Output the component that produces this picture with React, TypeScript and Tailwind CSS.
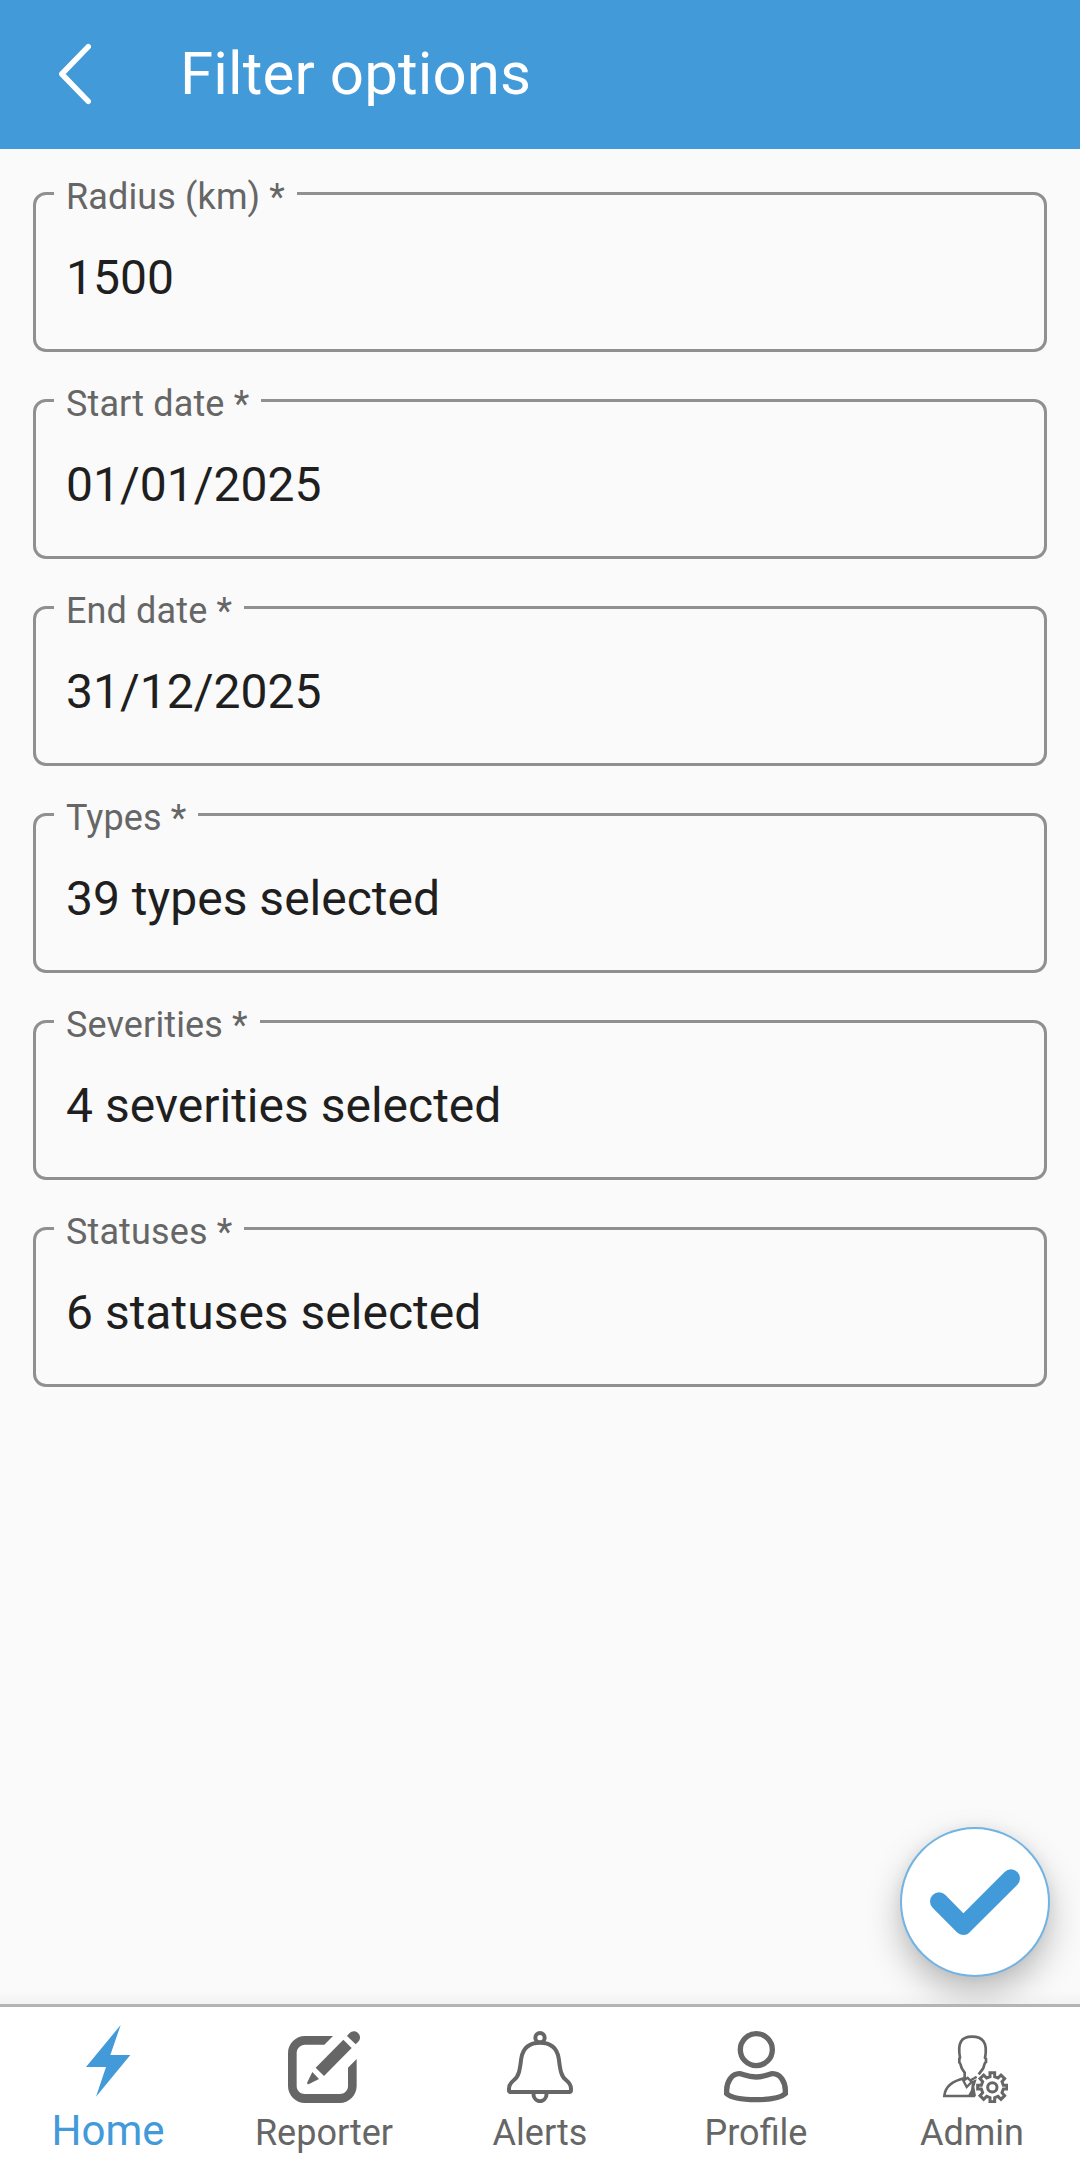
import type { ReactNode } from "react";

const fields = [
  { label: "Radius (km) *", value: "1500" },
  { label: "Start date *", value: "01/01/2025" },
  { label: "End date *", value: "31/12/2025" },
  { label: "Types *", value: "39 types selected" },
  { label: "Severities *", value: "4 severities selected" },
  { label: "Statuses *", value: "6 statuses selected" },
];

function Header() {
  return (
    <header className="flex h-[149px] shrink-0 items-center bg-[#429ad9] pb-[1px] text-white">
      <button aria-label="Back" className="ml-[57px] block">
        <svg width="34" height="62" viewBox="0 0 34 62" fill="none" stroke="currentColor" strokeWidth="5.5" strokeLinecap="round" strokeLinejoin="round" className="block">
          <path d="M31.3 3.7L4.8 31L31.3 58.3" />
        </svg>
      </button>
      <h1 className="ml-[89px] pb-[1px] text-[60px] leading-[70px] tracking-[0.12px]">Filter options</h1>
    </header>
  );
}

function Field({ label, value }: { label: string; value: string }) {
  return (
    <div className="relative flex h-[160px] items-center rounded-[13px] border-[3px] border-[#909090] px-[30px] pt-[11px]">
      <span className="absolute top-[-19px] left-[18px] bg-[#fafafa] px-[12px] text-[36px] leading-[42px] tracking-[0.13px] whitespace-nowrap text-[#666]">
        {label}
      </span>
      <span className="text-[48px] leading-[56px] text-[#1f1f1f]">{value}</span>
    </div>
  );
}

function HomeIcon() {
  return (
    <svg width="72" height="72" viewBox="96 105 216 216" fill="currentColor">
      <path d="M242 105L138 231H198L168 320L271 195H211Z" />
    </svg>
  );
}

function ReporterIcon() {
  return (
    <svg width="72" height="72" viewBox="144 123 216 216" fill="currentColor">
      <path d="M279 138H195C167 138 144 161 144 189V288C144 316 167 339 195 339H299C327 339 350 316 350 288V207L324 233V288C324 302 313 312 299 312H195C181 312 170 302 170 288V189C170 175 181 164 195 164H253Z" />
      <path d="M310 149L335 174L252 258L227 233Z" />
      <path d="M217 246L237 267L207 282C203 284 200 281 202 277Z" />
      <path d="M321 138L328 130C335 122 347 121 354 129C362 136 362 148 354 156L347 163Z" />
    </svg>
  );
}

function AlertsIcon() {
  return (
    <svg width="72" height="72" viewBox="162 123 216 216" fill="none" stroke="currentColor" strokeWidth="12" strokeLinejoin="round">
      <circle cx="270" cy="143" r="14" />
      <path d="M270 158C238 158 219 174 214 204C210 232 209 257 192 270C182 278 177 284 177 296V301Q177 306 182 306H358Q363 306 363 301V296C363 284 358 278 348 270C331 257 330 232 326 204C321 174 302 158 270 158Z" />
      <path d="M250 308C250 342 290 342 290 308" />
    </svg>
  );
}

function ProfileIcon() {
  return (
    <svg width="72" height="72" viewBox="180 123 216 216" fill="none" stroke="currentColor" strokeWidth="16">
      <circle cx="289" cy="179" r="48" />
      <path d="M238 251C215 251 200 276 200 301V311C225 335 351 335 376 311V301C376 276 361 251 338 251C328 251 315 261 288 261C261 261 248 251 238 251Z" />
    </svg>
  );
}

function AdminIcon() {
  return (
    <svg width="72" height="72" viewBox="168 123 216 216" fill="none" stroke="currentColor" strokeWidth="8">
      <path d="M254 266V248L246 236C242 228 242 219 238 217V206L240 203C232 158 244 140 276 140C308 140 324 158 315 203L318 207V216C312 219 313 228 309 236L296 253" />
      <path d="M256 264C219 272 195 290 193 318H285" />
      <path d="M250 272L263 263L275 276L260 291ZM273 270L284 264L290 260" strokeWidth="7" />
      <path d="M276 273L290 268L283 290L288 319H263L273 300Z" fill="currentColor" stroke="none" />
      <path
        d="M330 248H344V260L354 264L363 255L374 266L366 275L370 286H381V297H370L366 308L374 317L363 328L354 319L344 323V335H330V323L320 319L311 328L300 317L308 308L304 297H293V286H304L308 275L300 266L311 255L320 264L330 260Z"
        fill="#fff"
        strokeWidth="9"
      />
      <circle cx="337" cy="292" r="14" strokeWidth="9" />
    </svg>
  );
}

function NavItem({ label, icon, active }: { label: string; icon: ReactNode; active?: boolean }) {
  return (
    <a
      className={
        active
          ? "flex flex-1 flex-col items-center gap-[9px] pt-[18px] text-[42px] leading-[49px] text-[#429ad9]"
          : "flex flex-1 flex-col items-center gap-[9px] pt-[24px] text-[36px] leading-[42px] text-[#666]"
      }
    >
      {icon}
      <span>{label}</span>
    </a>
  );
}

export default function App() {
  return (
    <div className="flex h-[2175px] w-[1080px] flex-col overflow-hidden bg-[#fafafa] font-['Roboto',sans-serif]">
      <Header />
      <main className="relative flex flex-1 flex-col gap-[47px] overflow-hidden px-[33px] pt-[43px]">
        {fields.map((f) => (
          <Field key={f.label} label={f.label} value={f.value} />
        ))}
        <div className="absolute inset-x-0 bottom-0 h-[14px] bg-linear-to-b from-transparent to-black/3" />
        <button
          aria-label="Apply filters"
          className="absolute right-[30px] bottom-[27px] flex size-[150px] items-center justify-center rounded-full border-2 border-[#429ad9]/75 bg-white shadow-[0_16px_34px_rgba(0,0,0,0.25),0_0_14px_rgba(0,0,0,0.05)]"
        >
          <svg width="90" height="90" viewBox="150 170 270 270" fill="none" stroke="#429ad9" strokeWidth="54" strokeLinecap="round" strokeLinejoin="round">
            <path d="M177 303L250 377L393 234" />
          </svg>
        </button>
      </main>
      <nav className="flex h-[171px] shrink-0 border-t-[3px] border-[#b4b4b4] bg-white">
        <NavItem label="Home" icon={<HomeIcon />} active />
        <NavItem label="Reporter" icon={<ReporterIcon />} />
        <NavItem label="Alerts" icon={<AlertsIcon />} />
        <NavItem label="Profile" icon={<ProfileIcon />} />
        <NavItem label="Admin" icon={<AdminIcon />} />
      </nav>
    </div>
  );
}
